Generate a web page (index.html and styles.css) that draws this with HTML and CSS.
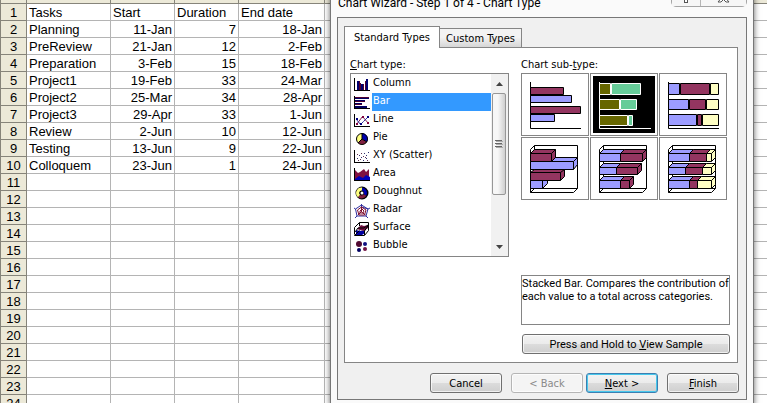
FILE: index.html
```html
<!DOCTYPE html>
<html lang="en">
<head>
<meta charset="utf-8">
<title>Chart Wizard</title>
<link rel="stylesheet" href="styles.css">
</head>
<body>
<main class="workspace">
<table class="sheet">
<colgroup><col class="c-num"><col class="c-task"><col class="c-start"><col class="c-dur"><col class="c-end"><col></colgroup>
<thead><tr><th></th><th></th><th></th><th></th><th></th><th></th></tr></thead>
<tbody>
<tr><th>1</th><td>Tasks</td><td>Start</td><td>Duration</td><td>End date</td><td></td></tr>
<tr class="data"><th>2</th><td>Planning</td><td>11-Jan</td><td>7</td><td>18-Jan</td><td></td></tr>
<tr class="data"><th>3</th><td>PreReview</td><td>21-Jan</td><td>12</td><td>2-Feb</td><td></td></tr>
<tr class="data"><th>4</th><td>Preparation</td><td>3-Feb</td><td>15</td><td>18-Feb</td><td></td></tr>
<tr class="data"><th>5</th><td>Project1</td><td>19-Feb</td><td>33</td><td>24-Mar</td><td></td></tr>
<tr class="data"><th>6</th><td>Project2</td><td>25-Mar</td><td>34</td><td>28-Apr</td><td></td></tr>
<tr class="data"><th>7</th><td>Project3</td><td>29-Apr</td><td>33</td><td>1-Jun</td><td></td></tr>
<tr class="data"><th>8</th><td>Review</td><td>2-Jun</td><td>10</td><td>12-Jun</td><td></td></tr>
<tr class="data"><th>9</th><td>Testing</td><td>13-Jun</td><td>9</td><td>22-Jun</td><td></td></tr>
<tr class="data"><th>10</th><td>Colloquem</td><td>23-Jun</td><td>1</td><td>24-Jun</td><td></td></tr>
<tr><th>11</th><td></td><td></td><td></td><td></td><td></td></tr>
<tr><th>12</th><td></td><td></td><td></td><td></td><td></td></tr>
<tr><th>13</th><td></td><td></td><td></td><td></td><td></td></tr>
<tr><th>14</th><td></td><td></td><td></td><td></td><td></td></tr>
<tr><th>15</th><td></td><td></td><td></td><td></td><td></td></tr>
<tr><th>16</th><td></td><td></td><td></td><td></td><td></td></tr>
<tr><th>17</th><td></td><td></td><td></td><td></td><td></td></tr>
<tr><th>18</th><td></td><td></td><td></td><td></td><td></td></tr>
<tr><th>19</th><td></td><td></td><td></td><td></td><td></td></tr>
<tr><th>20</th><td></td><td></td><td></td><td></td><td></td></tr>
<tr><th>21</th><td></td><td></td><td></td><td></td><td></td></tr>
<tr><th>22</th><td></td><td></td><td></td><td></td><td></td></tr>
<tr><th>23</th><td></td><td></td><td></td><td></td><td></td></tr>
<tr><th>24</th><td></td><td></td><td></td><td></td><td></td></tr>
</tbody>
</table>

<section class="dialog" role="dialog" aria-labelledby="dlg-title">
<header class="titlebar">
<h1 id="dlg-title">Chart Wizard - Step 1 of 4 - Chart Type</h1>
<div class="caption-buttons">
<button type="button" aria-label="Help"><svg width="10" height="12" viewBox="0 0 10 12"><path d="M2 4V2h2V1h3v1h1v3H7v1H6v2H4V5h2V3H4v1z" fill="#fff" stroke="#555"/><rect x="3.500" y="8.500" width="3" height="3" fill="#fff" stroke="#555"/></svg></button>
<button type="button" aria-label="Close"><svg width="13" height="10" viewBox="0 0 13 10"><path d="M1 1h3l2.500 2.500L9 1h3L8.500 5 12 9H9L6.500 6.500 4 9H1l3.500-4z" fill="#fff" stroke="#555"/></svg></button>
</div>
</header>
<div class="client">
<div class="tabs" role="tablist">
<button type="button" class="tab active" role="tab" aria-selected="true">Standard Types</button>
<button type="button" class="tab" role="tab" aria-selected="false">Custom Types</button>
</div>
<div class="panel" role="tabpanel">
<div class="types">
<p class="label" id="type-label"><u>C</u>hart type:</p>
<div class="listbox">
<ul role="listbox" aria-labelledby="type-label">
<li role="option"><svg class="icon" viewBox="0 0 16 16"><path d="M0 1h1v12h15v1H0z"/><path fill="#000070" d="M3 4h2v9H3zM7 7h2v6H7zM12 2h2v11h-2z"/><path fill="#500030" d="M5 4h1v9H5zM9 7h1v6H9zM11 4h1v9h-1zM6 6h1v7H6z"/></svg><span>Column</span></li>
<li role="option" class="selected" aria-selected="true"><svg class="icon" viewBox="0 0 16 16"><path d="M0 1h1v12h15v1H0z"/><path fill="#500030" d="M1 2h14v1H1zM1 6h10v1H1zM1 9h7v1H1z"/><path fill="#000060" d="M1 3h14v1H1zM1 5h10v1H1zM1 8h7v1H1zM1 11h12v2H1z"/></svg><span>Bar</span></li>
<li role="option"><svg class="icon" viewBox="0 0 16 16"><path d="M0 1h1v12h15v1H0z"/><path fill="none" stroke="#802050" d="M2.500 11.500L8.500 3.500 14.500 10.500"/><path fill="none" stroke="#3030a0" d="M2.500 6.500L6.500 11.500 9.500 8.500 14.500 3.500"/><path fill="#000080" d="M2 5h2v2H2zM6 10h2v2H6zM13 3h2v2h-2z"/><path fill="#800040" d="M2 10h2v2H2zM8 3h2v2H8zM13 9h2v2h-2z"/></svg><span>Line</span></li>
<li role="option"><svg class="icon" viewBox="0 0 16 16"><circle cx="8" cy="8" r="5.500" fill="#ffff80"/><path fill="#0000b0" d="M8 8V2a6 6 0 0 1 5 9z"/><path fill="#802040" d="M8 8l5 3a6 6 0 0 1-9 1z"/><circle cx="8" cy="8" r="5.500" fill="none" stroke="#000"/><path fill="none" stroke="#000" d="M8 2v6l5 3M8 8l-4 4"/></svg><span>Pie</span></li>
<li role="option"><svg class="icon" viewBox="0 0 16 16"><path d="M0 1h1v12h15v1H0z"/><path fill="#303070" d="M3 9h1v1H3zM5 6h1v1H5zM7 8h1v1H7zM10 4h1v1h-1zM12 6h1v1h-1zM14 3h1v1h-1zM12 9h1v1h-1zM9 11h1v1H9z"/><path fill="#603050" d="M3 5h1v1H3zM6 10h1v1H6zM9 7h1v1H9zM11 8h1v1h-1zM7 4h1v1H7zM4 11h1v1H4zM13 11h1v1h-1z"/></svg><span>XY (Scatter)</span></li>
<li role="option"><svg class="icon" viewBox="0 0 16 16"><path fill="#801040" d="M0 2l4 4 2-1 4-3 2 3 3-3v10H0z"/><path fill="#0000b8" d="M1 12l4-3 4 2 3-3 4 2v4H1z"/><path d="M0 1h1v12h15v1H0z"/></svg><span>Area</span></li>
<li role="option"><svg class="icon" viewBox="0 0 16 16"><circle cx="8" cy="8" r="4" fill="none" stroke="#000" stroke-width="5"/><path fill="none" stroke="#0000b0" stroke-width="3" d="M8 4a4 4 0 0 1 3 6"/><path fill="none" stroke="#802040" stroke-width="3" d="M11 10a4 4 0 0 1-6 1"/><path fill="none" stroke="#ffff80" stroke-width="3" d="M5 11a4 4 0 0 1 3-7"/></svg><span>Doughnut</span></li>
<li role="option"><svg class="icon" viewBox="0 0 16 16"><g fill="none"><path stroke="#3030a0" d="M7.500 1v3L14 6l2-1M14 6l-2 7 2 2M12 13H3l-2 2M3 13L1.500 6 0 5M1.500 6l6-4L14 6"/><path stroke="#801030" d="M7.500 4L12 7l-1.500 5H5L3.500 7zM8 6l2 2-1 2H6V8zM7.500 4v5l4 3M7 9l-3 3"/></g></svg><span>Radar</span></li>
<li role="option"><svg class="icon" viewBox="0 0 16 16"><path fill="#0000a0" d="M2 9l4 1 5-1v3l-3 2H2z"/><path fill="#701040" d="M3 8l4-4 3 1 4-1v3l-4 3-4-1z"/><path fill="none" stroke="#000" d="M.5 13.500v-7l5-5h9v8l-4 5H.5l5-5M5.500 1.500V5M10.500 14V10l4-6M1 11l3-4h6l4-3"/></svg><span>Surface</span></li>
<li role="option"><svg class="icon" viewBox="0 0 16 16"><circle cx="5" cy="5" r="3" fill="#500830"/><circle cx="11" cy="5" r="2" fill="#101080"/><circle cx="5" cy="11" r="2" fill="#000060"/><circle cx="11" cy="10" r="2" fill="#701040"/></svg><span>Bubble</span></li>
</ul>
<div class="scrollbar">
<button type="button" class="arrow" aria-label="Scroll up"><svg width="7" height="4" viewBox="0 0 7 4"><path d="M0 4l3.500-4L7 4z" fill="#444"/></svg></button>
<div class="thumb"><svg width="8" height="9" viewBox="0 0 8 9"><path d="M0 0h7v1H0zM0 3h7v1H0zM0 6h7v1H0z" fill="#666"/><path d="M1 1h7v1H1zM1 4h7v1H1zM1 7h7v1H1z" fill="#aaa"/></svg></div>
<button type="button" class="arrow down" aria-label="Scroll down"><svg width="7" height="4" viewBox="0 0 7 4"><path d="M0 0h7L3.500 4z" fill="#444"/></svg></button>
</div>
</div>
</div>
<div class="subtypes">
<p class="label">Chart sub-<u>t</u>ype:</p>
<div class="gallery">
<button type="button" aria-label="Clustered bar"><svg viewBox="0 0 62 57"><g stroke="#000"><path fill="none" d="M6.500 6v46.500H57"/><g fill="#933560"><path d="M6.500 11.500h33v7h-33zM6.500 30.500h50v7h-50z"/></g><g fill="#9c9cff"><path d="M6.500 19.500h41v7h-41zM6.500 38.500h24v7h-24z"/></g></g></svg></button>
<button type="button" class="chosen" aria-label="Stacked bar" aria-pressed="true"><svg viewBox="0 0 62 57"><path fill="#000" d="M0 0h62v57H0z"/><g stroke="#fff"><path fill="none" d="M6.500 6v46.500H58"/><path fill="#666600" d="M6.500 7.500h11v11h-11zM6.500 23.500h20v10h-20zM6.500 39.500h28v10h-28z"/><path fill="#66cc99" d="M18.500 7.500h29v11h-29zM27.500 23.500h16v10h-16zM35.500 39.500h4v10h-4z"/></g></svg></button>
<button type="button" aria-label="100% stacked bar"><svg viewBox="0 0 62 57"><g stroke="#000"><path fill="none" d="M6.500 6v46.500H57"/><path fill="#9c9cff" d="M6.500 7.500h11v11h-11zM6.500 23.500h20v10h-20zM6.500 38.500h28v11h-28z"/><path fill="#933560" d="M18.500 7.500h29v11h-29zM27.500 23.500h16v10h-16zM35.500 38.500h4v11h-4z"/><path fill="#ffffc4" d="M48.500 7.500h8v11h-8zM44.500 23.500h12v10h-12zM40.500 38.500h16v11h-16z"/></g></svg></button>
<button type="button" aria-label="Clustered bar, 3-D"><svg viewBox="0 0 62 57"><g stroke="#000"><path fill="none" d="M6.500 52.500v-43l4-4h43v43l-4 4h-43l4-4h43M10.500 5.500v43"/><path fill="#9c9cff" d="M6.500 40.500h12v8h-12zM18.500 40.500l5-4v7l-5 5zM6.500 21.500l4-4h43v7l-4 5h-43zM6.500 21.500h43v8M49.500 21.500l4-4"/><path fill="#933560" d="M6.500 32.500l4-3h30v7l-4 4h-30zM6.500 32.500h30v8M36.500 32.500l4-3M6.500 13.500l4-4h21v8l-4 4h-21zM6.500 13.500h21v8M27.500 13.500l4-4"/></g></svg></button>
<button type="button" aria-label="Stacked bar, 3-D"><svg viewBox="0 0 62 57"><g stroke="#000"><path fill="none" d="M6.500 52.500v-43l4-4h43v43l-4 4h-43l4-4h43M10.500 5.500v43"/><path fill="#9c9cff" d="M6.500 13.500l4-4h21l-4 4v8h-21zM6.500 13.500h21M6.500 27.500l4-4h17l-4 4v7h-17zM6.500 27.500h17M6.500 40.500l4-4h21l-4 4v8h-21zM6.500 40.500h21"/><path fill="#933560" d="M27.500 13.500l4-4h22v8l-4 4h-22zM27.500 13.500h22v8M49.500 13.500l4-4M23.500 27.500l4-4h21v7l-4 4h-21zM23.500 27.500h21v7M44.500 27.500l4-4M27.500 40.500l4-4h9v8l-4 4h-9zM27.500 40.500h9v8M36.500 40.500l4-4"/></g></svg></button>
<button type="button" aria-label="100% stacked bar, 3-D"><svg viewBox="0 0 62 57"><g stroke="#000"><path fill="none" d="M6.500 52.500v-43l4-4h43v43l-4 4h-43l4-4h43M10.500 5.500v43"/><path fill="#9c9cff" d="M6.500 13.500l4-4h21l-4 4v8h-21zM6.500 13.500h21M6.500 27.500l4-4h17l-4 4v7h-17zM6.500 27.500h17M6.500 40.500l4-4h21l-4 4v8h-21zM6.500 40.500h21"/><path fill="#933560" d="M27.500 13.500l4-4h17l-4 4v8h-17zM27.500 13.500h17M23.500 27.500l4-4h17l-4 4v7h-17zM23.500 27.500h17M27.500 40.500l4-4h8l-4 4v8h-8zM27.500 40.500h8"/><path fill="#ffffc4" d="M44.500 13.500l4-4h5v8l-4 4h-5zM44.500 13.500h5v8M49.500 13.500l4-4M40.500 27.500l4-4h9v7l-4 4h-9zM40.500 27.500h9v7M49.500 27.500l4-4M35.500 40.500l4-4h14v8l-4 4h-14zM35.500 40.500h14v8M49.500 40.500l4-4"/></g></svg></button>
</div>
<p class="description">Stacked Bar. Compares the contribution of each value to a total across categories.</p>
<button type="button" class="btn sample">Press and Hold to&nbsp;<u>V</u>iew Sample</button>
</div>
</div>
<footer class="actions">
<button type="button" class="btn">Cancel</button>
<div class="steps">
<button type="button" class="btn" disabled>&lt; Back</button>
<button type="button" class="btn primary"><u>N</u>ext &gt;</button>
</div>
<button type="button" class="btn"><u>F</u>inish</button>
</footer>
</div>
</section>
</main>
</body>
</html>
```

FILE: styles.css
```css
* {
  box-sizing: border-box;
}

body {
  margin: 0;
  background: #fff;
  color: #000;
}

button {
  margin: 0;
  padding: 0;
  font: inherit;
  color: inherit;
}

.workspace {
  position: relative;
  height: 100vh;
  overflow: hidden;
}

/* Worksheet */
.sheet {
  width: 100%;
  table-layout: fixed;
  border-collapse: separate;
  border-spacing: 0;
  border-left: 1px solid #86847a;
  font: 13px/14px "Liberation Sans", Arial, sans-serif;
}

.c-num { width: 26px; }
.c-task { width: 84px; }
.c-start,
.c-dur { width: 64px; }
.c-end { width: 86px; }

.sheet th,
.sheet td {
  height: 17px;
  padding: 2px 2px 0;
  border-right: 1px solid #b4b4b4;
  border-bottom: 1px solid #b4b4b4;
  text-align: left;
  font-weight: normal;
  white-space: nowrap;
}

.sheet th {
  background: #ece9d8;
  border-color: #86847a;
  text-align: center;
}

.sheet thead th {
  height: 4px;
}

.sheet th:last-child,
.sheet td:last-child {
  border-right: 0;
}

.sheet .data td:nth-child(n+3) {
  text-align: right;
}

/* Dialog window */
.dialog {
  position: absolute;
  top: -14px;
  left: 330px;
  right: 13px;
  padding: 0 6px 6px;
  border: 1px solid #777;
  border-top: 0;
  background: #fafafa;
  box-shadow: 0 0 6px rgba(0, 0, 0, 0.6);
  font: 11px/13px "DejaVu Sans Condensed", Tahoma, sans-serif;
}

.titlebar {
  display: flex;
  justify-content: space-between;
  height: 31px;
}

.titlebar h1 {
  margin: 0;
  padding: 8px 1px;
  font: 12px/18px Roboto, "Segoe UI", sans-serif;
  white-space: nowrap;
}

.caption-buttons {
  display: flex;
  height: 21px;
  border: 1px solid #a5a5a5;
  border-radius: 0 0 5px 5px;
}

.caption-buttons button {
  display: flex;
  align-items: flex-end;
  justify-content: center;
  width: 28px;
  padding-bottom: 3px;
  border: 0;
  background: #f6f6f6;
}

.caption-buttons button + button {
  width: 46px;
  border-left: 1px solid #b5b5b5;
}

.client {
  padding: 8px 8px 6px 6px;
  border: 1px solid #777;
  background: #f0f0f0;
}

.tabs {
  display: flex;
  align-items: flex-end;
}

.tab {
  width: 82px;
  height: 19px;
  border: 1px solid #858585;
  border-left: 0;
  border-bottom: 0;
  background: linear-gradient(#f3f3f3 45%, #d6d6d6);
  white-space: nowrap;
}

.tab.active {
  width: 96px;
  height: 22px;
  margin-bottom: -1px;
  border-left: 1px solid #858585;
  background: #fff;
}

.panel {
  display: grid;
  grid-template-columns: 159px 1fr;
  gap: 12px;
  padding: 10px 7px 8px 5px;
  border: 1px solid #858585;
  background: #fff;
}

.label {
  margin: 0 0 2px;
}

/* Chart type list */
.listbox {
  display: flex;
  height: 184px;
  border: 1px solid #858585;
}

.listbox ul {
  flex: 1;
  margin: 0;
  padding: 1px 0 0 3px;
  list-style: none;
}

.listbox li {
  display: flex;
  height: 18px;
}

.listbox span {
  flex: 1;
  margin-left: 2px;
  padding: 1px;
}

.listbox .selected span {
  background: #3399ff;
  color: #fff;
}

.icon {
  width: 16px;
  height: 16px;
  margin-top: 2px;
}

.scrollbar {
  display: flex;
  flex-direction: column;
  width: 17px;
  padding: 0 2px 0 1px;
  background: #f1f1f1;
}

.arrow {
  display: flex;
  align-items: center;
  justify-content: center;
  height: 19px;
  border: 0;
  background: none;
}

.arrow.down {
  margin-top: auto;
}

.thumb {
  display: flex;
  align-items: center;
  justify-content: center;
  height: 102px;
  border: 1px solid #979797;
  border-radius: 2px;
  background: linear-gradient(90deg, #f7f7f7 40%, #cfcfcf);
}

/* Sub-type gallery */
.subtypes {
  display: flex;
  flex-direction: column;
}

.gallery {
  display: grid;
  grid-template-columns: repeat(3, 68px);
  gap: 1px;
}

.gallery button {
  height: 63px;
  padding: 2px;
  border: 1px solid #858585;
  background: #fff;
}

.gallery svg {
  display: block;
  width: 62px;
  height: 57px;
}

.description,
.sample {
  font-family: Roboto, Tahoma, sans-serif;
}

.description {
  min-height: 50px;
  margin: 75px 0 9px;
  padding: 1px 0;
  border: 1px solid #858585;
}

.btn {
  width: 72px;
  height: 20px;
  border: 1px solid #707070;
  border-radius: 3px;
  background: linear-gradient(#f3f3f3 0%, #ebebeb 50%, #dcdcdc 50%, #cfcfcf 100%);
  box-shadow: inset 0 0 0 1px rgba(255, 255, 255, 0.7);
  white-space: nowrap;
}

.btn:disabled {
  border-color: #b5b5b5;
  background: #f4f4f4;
  color: #8a8a8a;
}

.btn.primary {
  border-color: #3c7fb1;
  box-shadow: inset 0 0 0 1px #48c8ec;
}

.btn.sample {
  width: auto;
  margin-left: 1px;
}

.actions {
  display: flex;
  justify-content: flex-end;
  gap: 9px;
  margin: 10px -1px 0 0;
}

.steps {
  display: flex;
  gap: 3px;
}
```
